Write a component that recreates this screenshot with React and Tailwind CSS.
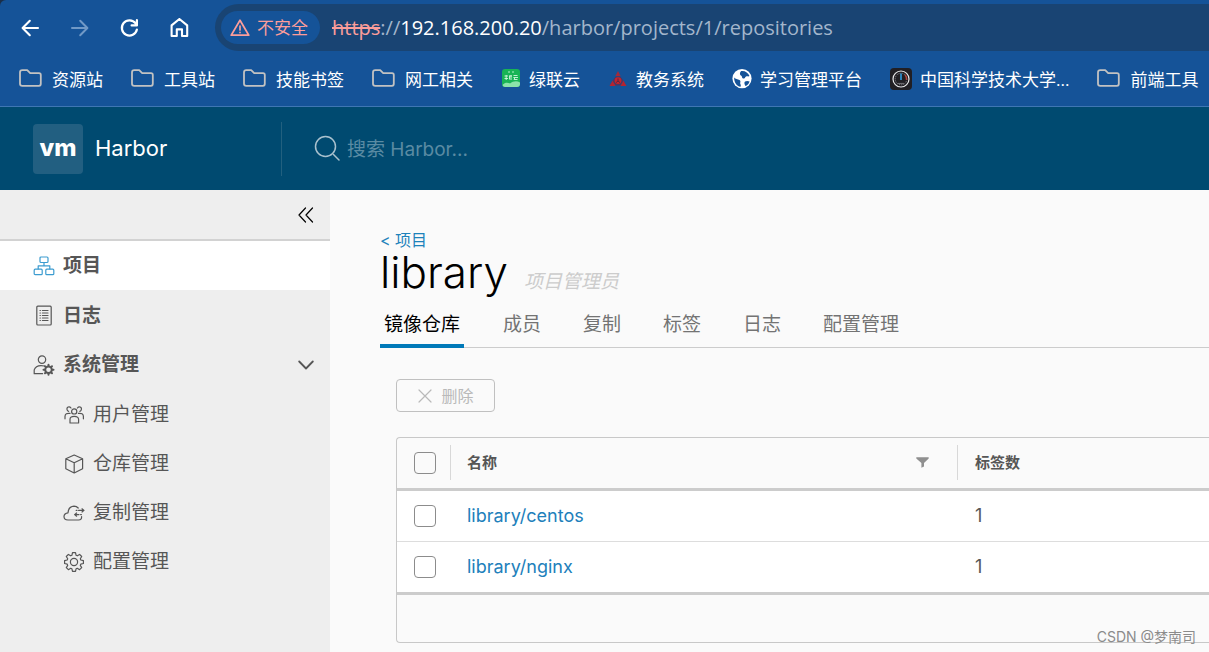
import { useState } from 'react';

const uiFont = "font-['Inter','Noto_Sans_CJK_SC',sans-serif]";

const Icon = ({ children, className = 'w-[22px] h-[22px]', box = '0 0 22 22', width = 1.2 }) => (
  <svg
    className={`shrink-0 ${className}`}
    viewBox={box}
    fill="none"
    stroke="currentColor"
    strokeWidth={width}
    strokeLinecap="round"
    strokeLinejoin="round"
    aria-hidden="true"
  >
    {children}
  </svg>
);

const FolderIcon = () => (
  <svg className="w-6 h-5 mr-px shrink-0 text-[#c2c2c2]" viewBox="0 0 24 20" fill="none" stroke="currentColor" strokeWidth="1.8" strokeLinejoin="round" aria-hidden="true">
    <path d="M1 3.5Q1 1.2 3.3 1.2H8.2L11.2 4.2H20Q21.8 4.2 21.8 6V14.8Q21.8 16.8 20 16.8H3.3Q1 16.8 1 14.8Z" />
  </svg>
);

const CloudAppIcon = () => (
  <svg className="w-5 h-5 shrink-0" viewBox="0 0 20 20" aria-hidden="true">
    <rect x="1" y="0" width="18" height="18" rx="3" fill="#18b455" />
    <path d="M1.5 16C4 13 7 13.5 9 14.5C12 12 16 11.5 19 13.5V15Q19 18 16 18H4Q2 18 1.5 16Z" fill="#8be3aa" />
    <path d="M7 3H9M11 3H13" stroke="#b4efca" strokeWidth="1.2" />
    <path d="M3.5 7H7M3.5 9.5H7M5.2 6V11M8.5 6.5V10.5M8.5 7H11M10 6V11M12.5 6.5H16.5M12.4 8.5H17M14 8.5L13 10.5H16.5" stroke="#d6f7e2" strokeWidth="0.9" fill="none" />
  </svg>
);

const TriangleLogo = () => (
  <svg className="w-5 h-5 shrink-0" viewBox="0 0 20 20" fill="none" aria-hidden="true">
    <path d="M10 2L12.6 7H7.4Z" fill="#a32a3c" />
    <path d="M1.5 17L4.6 11.4L7.6 17Z" fill="#b52330" />
    <path d="M18.5 17L15.4 11.4L12.4 17Z" fill="#b52330" />
    <path d="M7.6 7.6L4.6 11.4L7.6 16.4H12.4L15.4 11.4L12.4 7.6Z" fill="#4f3560" />
    <circle cx="10" cy="11.6" r="3.4" fill="#c4242d" />
    <path d="M10 9.5V12L8 13.6M10 12L12 13.6" stroke="#5b2545" strokeWidth="1" />
  </svg>
);

const GlobeIcon = () => (
  <svg className="w-5 h-5 shrink-0" viewBox="0 0 20 20" aria-hidden="true">
    <circle cx="10" cy="9.6" r="9.6" fill="#fff" />
    <path d="M2.2 8.5C3.5 10.4 5.6 10 7.5 11C9.5 12.2 7.5 13.6 8.6 15.4C9 16.3 8.8 17.2 8.4 17.8C4.8 17 2 13.8 2.2 8.5Z" fill="#155398" />
    <path d="M9.2 2C12.8 1.4 16.2 3.6 17.5 7C16 8 15.5 6.8 14 7.6C12.4 8.6 13.5 9.6 11.8 9.6C9.6 9.6 10.6 7.2 8.8 6.4C7.4 5.6 7.8 3 9.2 2Z" fill="#155398" />
    <path d="M13 12.6C14.5 11.4 16.5 12 17.6 12.4C16.8 14.8 15.2 16.4 13.4 17C12.6 15.4 11.8 13.8 13 12.6Z" fill="#155398" />
  </svg>
);

const GaugeIcon = () => (
  <svg className="w-[22px] h-[22px] shrink-0" viewBox="0 0 22 22" fill="none" aria-hidden="true">
    <rect width="22" height="22" rx="4" fill="#211f24" />
    <circle cx="11" cy="11" r="8" stroke="#e8e8ea" strokeWidth="1.2" />
    <circle cx="11" cy="11" r="5.8" stroke="#8d8c92" strokeWidth="1" strokeDasharray="1 1" />
    <path d="M15 6.8Q17 9 16.5 12" stroke="#b5443c" strokeWidth="1.3" />
    <path d="M11 5.5V12" stroke="#2f9be0" strokeWidth="1.6" />
    <path d="M8 15.5H14" stroke="#6a696e" strokeWidth="1.2" />
  </svg>
);

const bookmarks = [
  { name: '资源站', icon: FolderIcon },
  { name: '工具站', icon: FolderIcon },
  { name: '技能书签', icon: FolderIcon },
  { name: '网工相关', icon: FolderIcon },
  { name: '绿联云', icon: CloudAppIcon },
  { name: '教务系统', icon: TriangleLogo },
  { name: '学习管理平台', icon: GlobeIcon },
  { name: '中国科学技术大学...', icon: GaugeIcon },
  { name: '前端工具', icon: FolderIcon },
];

const ProjectsIcon = () => (
  <Icon>
    <rect x="7" y="2" width="8" height="5.5" rx="1" />
    <rect x="1.2" y="14.2" width="8" height="5.5" rx="1" />
    <rect x="12.8" y="14.2" width="8" height="5.5" rx="1" />
    <path d="M11 7.5V10.8M5.2 14V10.8H16.8V14" />
  </Icon>
);

const LogsIcon = () => (
  <Icon>
    <rect x="3.8" y="1.2" width="14.4" height="18.8" rx="1" />
    <path d="M7 5.5H7.4M7 8H7.4M7 10.5H7.4M7 13H7.4M7 15.5H7.4M9.4 5.5H15M9.4 8H15M9.4 10.5H15M9.4 13H15M9.4 15.5H15" />
  </Icon>
);

const AdminIcon = () => (
  <Icon>
    <circle cx="9" cy="4.6" r="3.7" />
    <path d="M11.5 11Q3 9.4 1.2 14.9V18.7H9.6" />
    <circle cx="15.5" cy="14.8" r="3.3" strokeWidth="2" />
    <path d="M15.5 9.8V11M15.5 18.6V19.8M10.5 14.8H11.7M19.3 14.8H20.5M12 11.3L12.8 12.1M18.2 17.5L19 18.3M19 11.3L18.2 12.1M12.8 17.5L12 18.3" strokeWidth="2" />
  </Icon>
);

const UsersIcon = () => (
  <Icon>
    <circle cx="11.2" cy="7.4" r="2.6" />
    <path d="M7 19V15.4Q7 12.4 11.2 12.4T15.6 15.4V19Z" />
    <path d="M8 4Q6.8 2.4 5.2 3Q3.4 3.8 4.2 6Q4.6 7 5.6 7.4M14.4 4Q15.6 2.4 17.2 3Q19 3.8 18.2 6Q17.8 7 16.8 7.4" />
    <path d="M7 9.4Q2.2 8.8 2 12.4V14.8M15.4 9.4Q20.2 8.8 20.4 12.4V14.8" />
  </Icon>
);

const BoxIcon = () => (
  <Icon>
    <path d="M11.2 2L19.6 5.8V15.8L11.2 20L2.8 15.8V5.8ZM2.8 5.8L11.2 9.8L19.6 5.8M11.2 9.8V20" />
  </Icon>
);

const ReplicationIcon = () => (
  <Icon>
    <path d="M18.6 14.5Q18.8 18 15.6 18H5Q1 17.8 1 14.4Q1.2 11.2 5 10.8Q5.4 4.6 11 4.2Q13.6 4.2 15.2 6" />
    <path d="M13.2 8.4H14M15.6 8.4H20.6M19 6.8L21 8.4L19 10" />
    <path d="M12 12.6H16M17.6 12.6H18.4M13.6 11L11.6 12.6L13.6 14.2" />
  </Icon>
);

const ConfigIcon = () => (
  <Icon>
    <circle cx="11" cy="11" r="3.6" />
    <path d="M9.5 1.7H12.5L13.1 4.3L14.3 4.8L16.6 3.4L18.7 5.5L17.3 7.7L17.8 9L20.4 9.6V12.5L17.8 13.1L17.3 14.4L18.7 16.6L16.6 18.7L14.3 17.3L13.1 17.8L12.5 20.4H9.5L8.9 17.8L7.7 17.3L5.4 18.7L3.3 16.6L4.7 14.4L4.2 13.1L1.6 12.5V9.6L4.2 9L4.7 7.7L3.3 5.5L5.4 3.4L7.7 4.8L8.9 4.3Z" />
  </Icon>
);

const adminItems = [
  { name: '用户管理', icon: UsersIcon },
  { name: '仓库管理', icon: BoxIcon },
  { name: '复制管理', icon: ReplicationIcon },
  { name: '配置管理', icon: ConfigIcon },
];

const tabs = ['镜像仓库', '成员', '复制', '标签', '日志', '配置管理'];

const repositories = [
  { name: 'library/centos', tags: 1 },
  { name: 'library/nginx', tags: 1 },
];

const Browser = () => (
  <div className="bg-[#155398] rounded-tl-md border-b border-[#3f76b3] font-['Open_Sans','Noto_Sans_CJK_SC',sans-serif] overflow-hidden">
    <div className="flex items-center pl-5 pt-1">
      <div className="flex items-center gap-[30px] text-white">
        <button aria-label="后退">
          <Icon className="w-5 h-5" box="0 0 20 20" width={2.1}>
            <path d="M18 10H3M9.8 2.8L2.6 10L9.8 17.2" />
          </Icon>
        </button>
        <button aria-label="前进" className="text-[#7199c6]">
          <Icon className="w-5 h-5" box="0 0 20 20" width={2}>
            <path d="M2 10H17M10.2 2.8L17.4 10L10.2 17.2" />
          </Icon>
        </button>
        <button aria-label="刷新">
          <Icon className="w-5 h-5" box="0 0 20 20" width={2.2}>
            <path d="M16.9 11.5A7.6 7.6 0 1 1 15.6 5.4L16.6 7M16.9 2.2V7.4H11.6" />
          </Icon>
        </button>
        <button aria-label="主页">
          <Icon className="w-5 h-5" box="0 0 20 20" width={2.1}>
            <path d="M1.6 7.4L9.4 1L17.2 7.4V18H12V11.4H6.8V18H1.6Z" />
          </Icon>
        </button>
      </div>
      <div className="ml-[25px] flex-1 min-w-0 h-[47px] flex items-center gap-3 bg-[#194473] rounded-l-full pl-[6px]">
        <button className="h-[33px] shrink-0 flex items-center gap-[6px] rounded-full bg-[#155398] pl-2 pr-3 text-[#fb9d9a] text-[17px]">
          <Icon className="w-[22px] h-5" box="0 0 22 20" width={1.7}>
            <path d="M11 2.2L19.8 17.2H2.2ZM11 8V12M11 14.4V14.6" />
          </Icon>
          不安全
        </button>
        <div className="text-xl whitespace-nowrap text-[#a3b6cc]">
          <span className="line-through text-[#fb9d9a]">https</span>://<span className="text-white">192.168.200.20</span>/harbor/projects/1/repositories
        </div>
      </div>
    </div>
    <nav className="h-[55px] flex items-center gap-7 pl-[19px] text-[17px] text-white whitespace-nowrap">
      {bookmarks.map(({ name, icon: BookmarkIcon }) => (
        <a key={name} href="#" className="flex items-center gap-2">
          <BookmarkIcon />
          <span className="pt-0.5">{name}</span>
        </a>
      ))}
    </nav>
  </div>
);

const Header = () => (
  <header className="h-[83px] bg-[#004a70] flex items-center">
    <div className="w-[281px] shrink-0 flex items-center gap-3 pl-[33px]">
      <div className="w-[50px] h-[50px] rounded bg-[#225f81] flex items-center justify-center text-2xl leading-none font-extrabold text-white pb-0.5">
        vm
      </div>
      <span className="text-[22px] text-white">Harbor</span>
    </div>
    <label className="h-[54px] flex-1 flex items-center gap-[6px] border-l border-[#22607f] pl-8">
      <Icon className="w-[27px] h-[27px] text-[#a9c1ce]" box="0 0 27 27" width={1.5}>
        <circle cx="11.5" cy="11.5" r="10" />
        <path d="M19.5 19.5L25 25" />
      </Icon>
      <input
        type="text"
        placeholder="搜索 Harbor..."
        aria-label="搜索"
        className="flex-1 min-w-0 pt-1 bg-transparent text-[19px] outline-none placeholder:text-[#5a8ba3]"
      />
    </label>
  </header>
);

const Sidebar = () => {
  const [open, setOpen] = useState(true);

  return (
    <aside className="w-[330px] shrink-0 bg-[#eeeeee] text-[19px] text-[#565656]">
      <div className="h-[51px] flex items-center justify-end border-b-2 border-[#d2d2d2] pr-4 text-black">
        <button aria-label="收起">
          <Icon className="w-4 h-4" box="0 0 16 16">
            <path d="M7.5 1L1 8L7.5 15M14.5 1L8 8L14.5 15" />
          </Icon>
        </button>
      </div>
      <nav>
        <div className="flex flex-col gap-px font-bold">
          <a href="#" className="h-[49px] flex items-center gap-2 bg-white pl-[33px]">
            <span className="text-[#3c9cd0]"><ProjectsIcon /></span>
            <span className="pt-0.5">项目</span>
          </a>
          <a href="#" className="h-[49px] flex items-center gap-2 pl-[33px]">
            <LogsIcon />
            <span className="pt-0.5">日志</span>
          </a>
          <button onClick={() => setOpen(!open)} className="h-[49px] flex items-center gap-2 pl-[33px] pr-4">
            <AdminIcon />
            <span className="flex-1 text-left">系统管理</span>
            <Icon className="w-4 h-4" box="0 0 16 16" width={1.8}>
              <path d="M1.2 3.5L8 10.5L14.8 3.5" />
            </Icon>
          </button>
        </div>
        {open && adminItems.map(({ name, icon: ItemIcon }) => (
          <a key={name} href="#" className="h-[49px] flex items-center gap-2 pl-[63px]">
            <ItemIcon />
            <span className="pt-0.5">{name}</span>
          </a>
        ))}
      </nav>
    </aside>
  );
};

const Checkbox = ({ label }) => (
  <input
    type="checkbox"
    aria-label={label}
    className="block w-[22px] h-[22px] ml-[17px] appearance-none rounded border border-[#8c8c8c] bg-transparent checked:bg-[#0079b8]"
  />
);

const RepositoryTable = () => (
  <div className="ml-4 mt-[25px] border border-r-0 border-[#c8c8c8] rounded-l">
    <table className="w-full table-fixed text-left">
      <thead>
        <tr className="h-[51px] border-b-[3px] border-[#cccccc] text-[15px] text-[#565656]">
          <th className="w-[53px]"><Checkbox label="全选" /></th>
          <th className="w-[507px]">
            <div className="h-[35px] flex items-center justify-between border-l border-[#d8d8d8] pl-4 pr-7">
              名称
              <button aria-label="筛选">
                <svg className="w-[13px] h-[11px]" viewBox="0 0 13 11" fill="#8f8f8f" aria-hidden="true">
                  <path d="M0.3 0.3H12.7V1.4L8 6V9.5L5.4 10.7V6L0.3 1.4Z" />
                </svg>
              </button>
            </div>
          </th>
          <th>
            <div className="h-[35px] flex items-center border-l border-[#d8d8d8] pl-[17px]">标签数</div>
          </th>
        </tr>
      </thead>
      <tbody className="bg-white text-lg border-b-[3px] border-[#cccccc]">
        {repositories.map((repo) => (
          <tr key={repo.name} className="h-[52px] border-b border-[#dddddd] last:border-b-0">
            <td><Checkbox label={repo.name} /></td>
            <td className="pl-[17px]"><a href="#" className="text-[#2180bb]">{repo.name}</a></td>
            <td className="pl-[18px] text-[#565656]">{repo.tags}</td>
          </tr>
        ))}
      </tbody>
    </table>
    <div className="h-[47px]" />
  </div>
);

const Project = () => {
  const [active, setActive] = useState(tabs[0]);

  return (
    <main className="flex-1 min-w-0 bg-[#fafafa] pl-[50px] pt-[38px] pb-[10px]">
      <a href="#" className="block w-fit text-base leading-6 text-[#1d82bb]">&lt; 项目</a>
      <div className="flex items-baseline gap-4">
        <h1 className="text-[44px] leading-[40px] font-light text-black">library</h1>
        <span className="text-[19px] leading-6 italic text-[#cccccc]">项目管理员</span>
      </div>
      <div className="mt-[11px] flex gap-9 border-b border-[#cccccc] text-[19px] text-[#737373]">
        {tabs.map((tab) => (
          <button
            key={tab}
            onClick={() => setActive(tab)}
            className={tab === active
              ? 'h-[43px] -mb-px px-1 pt-0.5 border-b-4 border-[#0079b8] text-black'
              : 'h-[43px] -mb-px px-[3px] pt-0.5 border-b-4 border-transparent'}
          >
            {tab}
          </button>
        ))}
      </div>
      <button disabled className="ml-4 mt-[31px] w-[99px] h-[33px] flex items-center justify-center gap-2 border border-[#c0c0c0] rounded text-base text-[#b9b9b9]">
        <Icon className="w-4 h-4" box="0 0 16 16">
          <path d="M2 2L14 14M14 2L2 14" />
        </Icon>
        删除
      </button>
      <RepositoryTable />
    </main>
  );
};

const App = () => (
  <div className={`relative min-h-screen flex flex-col overflow-hidden bg-[#1b2f49] ${uiFont}`}>
    <Browser />
    <Header />
    <div className="flex-1 flex">
      <Sidebar />
      <Project />
    </div>
    <span className="absolute right-[13px] bottom-[6px] text-sm text-[#8b8b8b]">CSDN @梦南司</span>
  </div>
);

export default App;
